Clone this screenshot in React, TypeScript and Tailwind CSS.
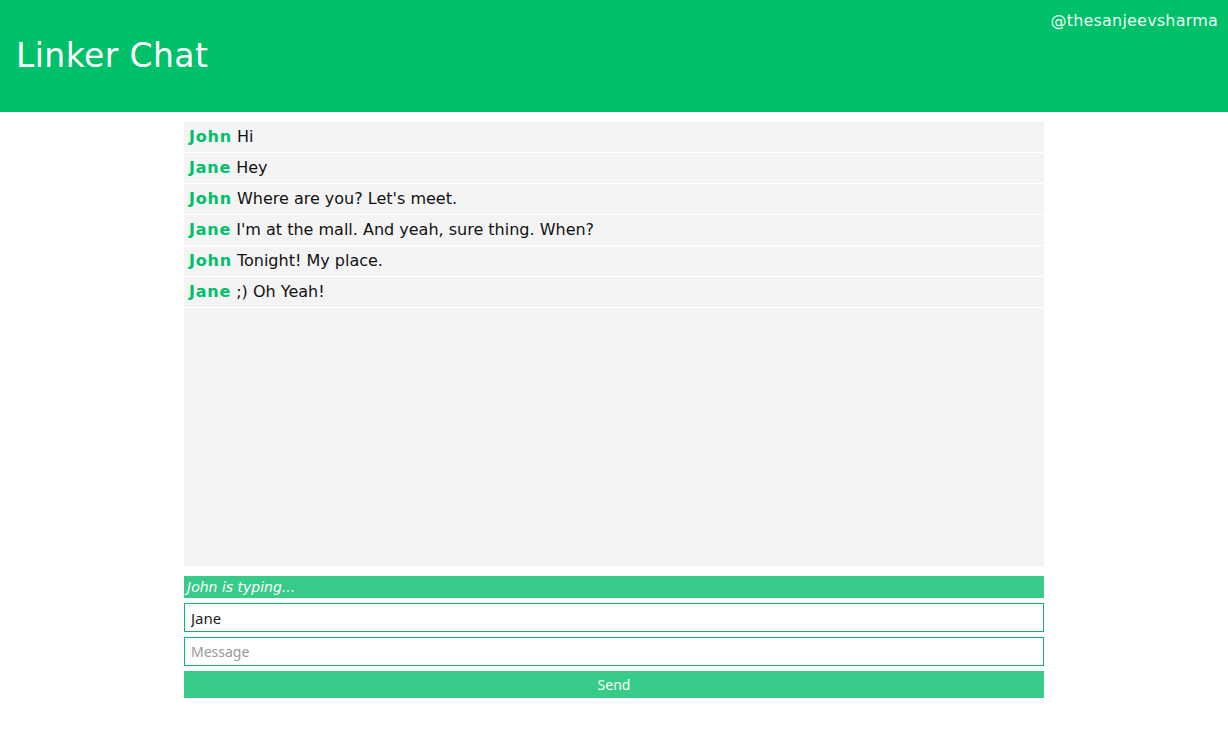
import { useState } from 'react'

const messages = [
  { name: 'John', text: 'Hi' },
  { name: 'Jane', text: 'Hey' },
  { name: 'John', text: "Where are you? Let's meet." },
  { name: 'Jane', text: "I'm at the mall. And yeah, sure thing. When?" },
  { name: 'John', text: 'Tonight! My place.' },
  { name: 'Jane', text: ';) Oh Yeah!' },
]

export default function App() {
  const [name, setName] = useState('Jane')
  const [message, setMessage] = useState('')

  return (
    <div className="min-h-screen bg-white font-['DejaVu_Sans',sans-serif]">
      {/* Header */}
      <header className="relative h-[112px] bg-[#00c06a] flex items-center px-4">
        <h1 className="text-[33px] text-white tracking-[0.4px]">Linker Chat</h1>
        <span className="absolute right-[10px] top-[9px] text-[16px] tracking-[0.2px] text-white/95">
          @thesanjeevsharma
        </span>
      </header>

      <div className="w-[860px] mx-auto pt-[10px]">
        {/* Messages */}
        <div className="h-[444px] bg-[#f4f4f4] flex flex-col">
          {messages.map((m, i) => (
            <div key={i} className="h-[31px] shrink-0 flex items-center px-[5px] text-[16px] text-[#111] border-b border-white">
              <span className="font-semibold text-[#00c06a] tracking-[0.8px] mr-[5px]">{m.name}</span>
              <span>{m.text}</span>
            </div>
          ))}
        </div>

        {/* Typing */}
        <div className="mt-[10px] h-[22px] bg-[#36cc88] px-[3px] flex items-center text-[14px] italic text-white">
          John is typing...
        </div>

        <input
          value={name}
          onChange={(e) => setName(e.target.value)}
          className="mt-[5px] block w-full h-[29px] px-[6px] text-[15px] text-[#222] font-['Noto_Sans',sans-serif] border border-[#00c06a] border-r-[#21a86c] border-b-[#21a86c] outline-none"
        />
        <input
          value={message}
          onChange={(e) => setMessage(e.target.value)}
          placeholder="Message"
          className="mt-[5px] block w-full h-[29px] px-[6px] text-[14px] text-[#222] placeholder:text-[#999] font-['Noto_Sans',sans-serif] border border-[#00c06a] border-r-[#21a86c] border-b-[#21a86c] outline-none"
        />
        <button className="mt-[5px] block w-full h-[27px] bg-[#36cc88] text-white text-[14px] font-['Noto_Sans',sans-serif]">
          Send
        </button>
      </div>
    </div>
  )
}
